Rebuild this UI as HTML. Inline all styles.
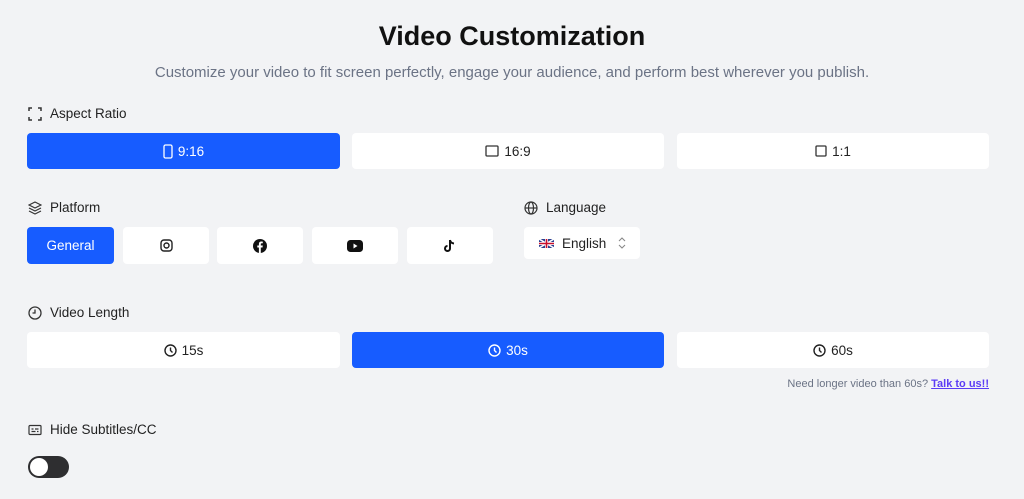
<!DOCTYPE html>
<html><head><meta charset="utf-8"><style>
*{box-sizing:border-box;margin:0;padding:0}
body{width:1024px;height:499px;background:#f2f3f5;font-family:"Liberation Sans",sans-serif;position:relative;overflow:hidden;color:#222}
.a{position:absolute}
.btn{position:absolute;background:#fff;border-radius:4px;display:flex;align-items:center;justify-content:center;font-size:13.5px;color:#222;gap:5px}
.blue{background:#175cff;color:#fff}
.lbl{position:absolute;font-size:13.5px;color:#222;display:flex;align-items:center;gap:8px}
svg{display:block}
</style></head><body>
<div class="a" style="left:0;width:1024px;top:21px;text-align:center;font-size:27px;font-weight:bold;color:#111">Video Customization</div>
<div class="a" style="left:0;width:1024px;top:64px;text-align:center;font-size:15px;color:#6b7385">Customize your video to fit screen perfectly, engage your audience, and perform best wherever you publish.</div>

<div class="lbl" style="left:28px;top:106px"><svg width="14" height="14" viewBox="0 0 14 14" fill="none" stroke="#333" stroke-width="1.5"><path d="M1 4V1h3M10 1h3v3M13 10v3h-3M4 13H1v-3"/></svg>Aspect Ratio</div>
<div class="btn blue" style="left:27px;top:133px;width:313px;height:36px"><svg width="10" height="15" viewBox="0 0 10 15" fill="none" stroke="#fff" stroke-width="1.3"><rect x="1" y="1" width="8" height="13" rx="1.5"/></svg>9:16</div>
<div class="btn" style="left:352px;top:133px;width:312px;height:36px"><svg width="14" height="12" viewBox="0 0 14 12" fill="none" stroke="#333" stroke-width="1.3"><rect x="1" y="1" width="12" height="10" rx="1"/></svg>16:9</div>
<div class="btn" style="left:677px;top:133px;width:312px;height:36px"><svg width="12" height="12" viewBox="0 0 12 12" fill="none" stroke="#333" stroke-width="1.3"><rect x="1" y="1" width="10" height="10" rx="1"/></svg>1:1</div>

<div class="lbl" style="left:28px;top:200px"><svg width="14" height="14" viewBox="0 0 14 14" fill="none" stroke="#333" stroke-width="1.2"><path d="M7 1L1 4l6 3 6-3zM1 7l6 3 6-3M1 10l6 3 6-3"/></svg>Platform</div>
<div class="btn blue" style="left:27px;top:227px;width:87px;height:37px">General</div>
<div class="btn" style="left:123px;top:227px;width:86px;height:37px"><svg width="13" height="13" viewBox="0 0 13 13" fill="none" stroke="#222" stroke-width="1.4"><rect x="1" y="1" width="11" height="11" rx="3"/><circle cx="6.5" cy="6.5" r="2.5"/></svg></div>
<div class="btn" style="left:217px;top:227px;width:86px;height:37px"><svg width="14" height="14" viewBox="0 0 14 14"><circle cx="7" cy="7" r="7" fill="#111"/><path d="M7.8 14V8.5h1.7l.3-2H7.8V5.3c0-.6.2-1 1-1h1V2.6c-.2 0-.8-.1-1.5-.1-1.5 0-2.4.9-2.4 2.5v1.5H4.3v2h1.6V14z" fill="#fff"/></svg></div>
<div class="btn" style="left:312px;top:227px;width:86px;height:37px"><svg width="16" height="12" viewBox="0 0 16 12"><rect width="16" height="12" rx="3.5" fill="#111"/><path d="M6.5 3.5v5l4-2.5z" fill="#fff"/></svg></div>
<div class="btn" style="left:407px;top:227px;width:86px;height:37px"><svg width="12" height="14" viewBox="0 0 12 14" fill="none" stroke="#111" stroke-width="2"><path d="M6 1v8.5a2.5 2.5 0 1 1-2.5-2.5M6 1c.3 2 1.7 3.3 4 3.5"/></svg></div>

<div class="lbl" style="left:524px;top:200px"><svg width="14" height="14" viewBox="0 0 14 14" fill="none" stroke="#333" stroke-width="1.2"><circle cx="7" cy="7" r="6"/><ellipse cx="7" cy="7" rx="2.5" ry="6"/><path d="M1 7h12"/></svg>Language</div>
<div class="btn" style="left:524px;top:227px;width:116px;height:32px;justify-content:flex-start;padding-left:15px;gap:8px"><svg width="15" height="9" viewBox="0 0 15 9"><rect width="15" height="9" fill="#2a3f8f"/><path d="M0 0l15 9M15 0L0 9" stroke="#fff" stroke-width="1.6"/><path d="M6 0h3v9H6zM0 3h15v3H0z" fill="#fff"/><path d="M6.7 0h1.6v9H6.7zM0 3.7h15v1.6H0z" fill="#c8102e"/></svg>English<svg width="8" height="12" viewBox="0 0 8 12" fill="none" stroke="#888" stroke-width="1.1" style="margin-left:4px"><path d="M1 4l3-3 3 3M1 8l3 3 3-3"/></svg></div>

<div class="lbl" style="left:28px;top:305px"><svg width="14" height="14" viewBox="0 0 14 14" fill="none" stroke="#333" stroke-width="1.3"><circle cx="7" cy="7" r="6"/><path d="M7 3.5V7H4.5"/></svg>Video Length</div>
<div class="btn" style="left:27px;top:332px;width:313px;height:36px"><svg width="13" height="13" viewBox="0 0 13 13" fill="none" stroke="#222" stroke-width="1.4"><circle cx="6.5" cy="6.5" r="5.5"/><path d="M6.5 3.5v3l2 2"/></svg>15s</div>
<div class="btn blue" style="left:352px;top:332px;width:312px;height:36px"><svg width="13" height="13" viewBox="0 0 13 13" fill="none" stroke="#fff" stroke-width="1.4"><circle cx="6.5" cy="6.5" r="5.5"/><path d="M6.5 3.5v3l2 2"/></svg>30s</div>
<div class="btn" style="left:677px;top:332px;width:312px;height:36px"><svg width="13" height="13" viewBox="0 0 13 13" fill="none" stroke="#222" stroke-width="1.4"><circle cx="6.5" cy="6.5" r="5.5"/><path d="M6.5 3.5v3l2 2"/></svg>60s</div>
<div class="a" style="right:35px;top:378px;font-size:11px;color:#6b7385">Need longer video than 60s? <span style="color:#5b3cf5;font-weight:bold;text-decoration:underline">Talk to us!!</span></div>

<div class="lbl" style="left:28px;top:422px"><svg width="14" height="12" viewBox="0 0 14 12" fill="none" stroke="#333" stroke-width="1.2"><rect x="1" y="1.5" width="12" height="9" rx="1"/><path d="M3.5 5h2M7 5h3.5M3.5 7.5h4M9 7.5h1.5"/></svg>Hide Subtitles/CC</div>
<div class="a" style="left:28px;top:456px;width:41px;height:22px;border-radius:11px;background:#2e2e30"><div class="a" style="left:2px;top:2px;width:18px;height:18px;border-radius:50%;background:#fff"></div></div>
</body></html>
